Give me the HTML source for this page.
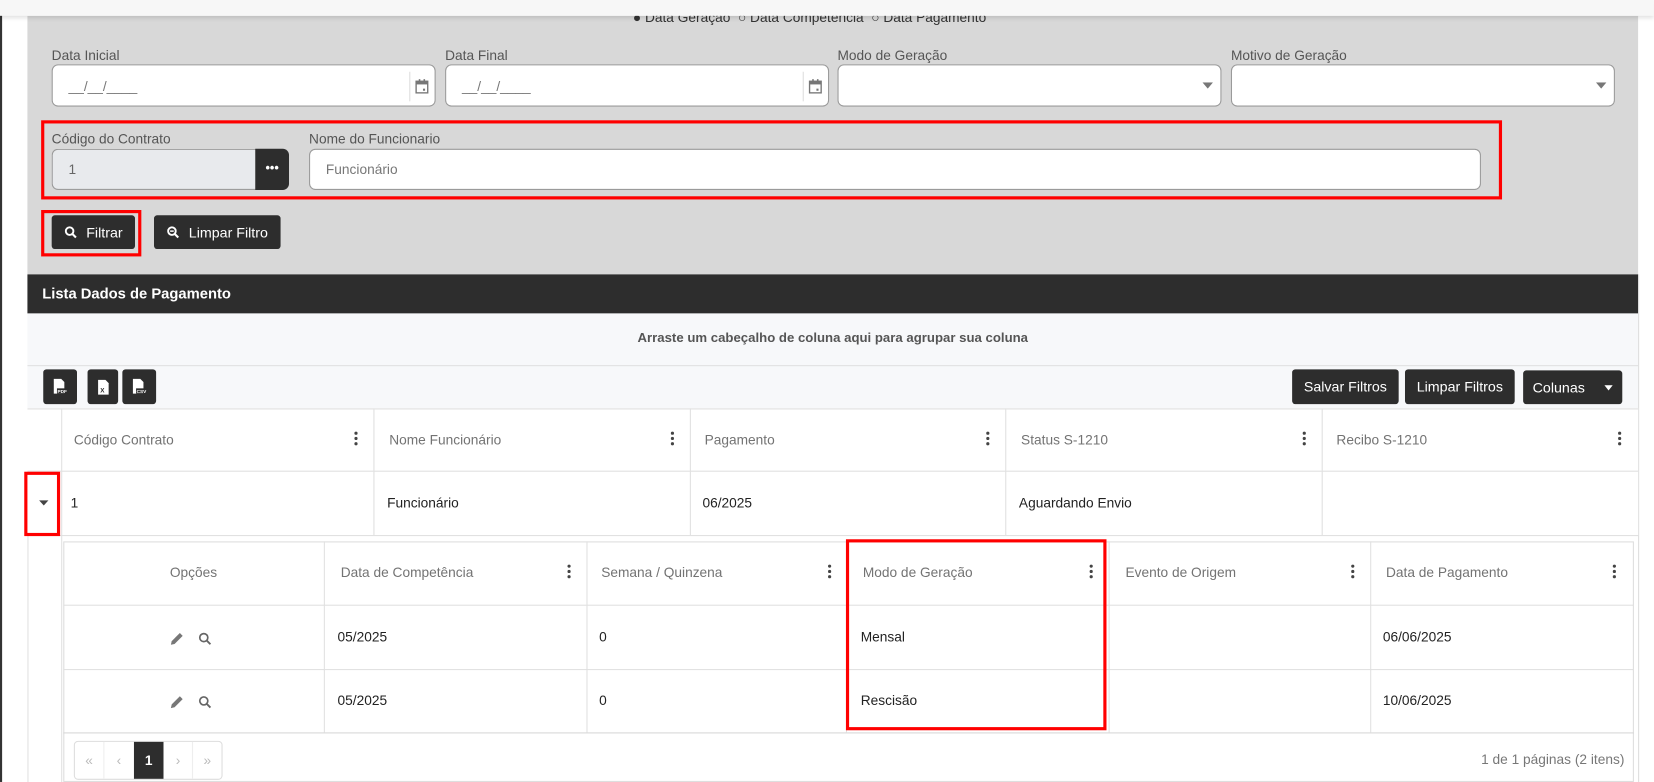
<!DOCTYPE html>
<html><head><meta charset="utf-8"><style>
*{box-sizing:border-box;margin:0;padding:0}
html,body{width:1654px;height:782px;overflow:hidden;background:#fff;font-family:"Liberation Sans",sans-serif}
#w{position:absolute;left:0;top:0;width:1568px;height:741px;transform:scale(1.0548,1.0553);transform-origin:0 0}
.a{position:absolute}
.lbl{position:absolute;font-size:13px;color:#555}
.inp{position:absolute;background:#fff;border:1px solid #9a9a9a;border-radius:6px;height:40px}
.red{position:absolute;border:3px solid #f00}
.btn{position:absolute;background:#2d2d2d;color:#fff;border-radius:3px;font-size:13.5px;display:flex;align-items:center;justify-content:center}
.hc{position:absolute;font-size:13px;color:#737373}
.tc{position:absolute;font-size:13px;color:#222}
.vl{position:absolute;width:1px;background:#e0e0e0}
.hl{position:absolute;height:1px;background:#e0e0e0}
.keb{position:absolute;width:3px;height:13px}
.keb i{display:block;width:3px;height:3px;border-radius:50%;background:#444;margin-bottom:2px}
</style></head><body><div id="w">
<div class="a" style="left:0;top:0;width:2px;height:741px;background:#333"></div>
<div class="a" style="left:26px;top:15px;width:1527px;height:245px;background:#d8d8d8"></div>
<div class="a" style="left:600px;top:9px;font-size:13px;color:#333;white-space:nowrap">● Data Geração &nbsp;○ Data Competência &nbsp;○ Data Pagamento</div>
<div class="a" style="left:0;top:0;width:1568px;height:15px;background:#f7f7f7;box-shadow:0 2px 4px rgba(0,0,0,.12)"></div>

<div class="lbl" style="left:49px;top:45px">Data Inicial</div>
<div class="lbl" style="left:422px;top:45px">Data Final</div>
<div class="lbl" style="left:794px;top:45px">Modo de Geração</div>
<div class="lbl" style="left:1167px;top:45px">Motivo de Geração</div>
<div class="inp" style="left:49px;top:61px;width:364px"><span class="a" style="left:15px;top:12px;font-size:13px;color:#777">__/__/____</span><span class="a" style="left:338px;top:6px;width:1px;height:28px;background:#ddd"></span><svg class="a" style="left:343px;top:12px" width="14" height="15" viewBox="0 0 14 15"><rect x="1.5" y="3" width="11" height="11" fill="none" stroke="#777" stroke-width="1.3"/><rect x="1.5" y="3" width="11" height="3" fill="#777"/><rect x="4" y="1" width="1.5" height="3" fill="#777"/><rect x="8.5" y="1" width="1.5" height="3" fill="#777"/><rect x="8" y="10" width="2" height="2" fill="#777"/></svg></div>
<div class="inp" style="left:422px;top:61px;width:364px"><span class="a" style="left:15px;top:12px;font-size:13px;color:#777">__/__/____</span><span class="a" style="left:338px;top:6px;width:1px;height:28px;background:#ddd"></span><svg class="a" style="left:343px;top:12px" width="14" height="15" viewBox="0 0 14 15"><rect x="1.5" y="3" width="11" height="11" fill="none" stroke="#777" stroke-width="1.3"/><rect x="1.5" y="3" width="11" height="3" fill="#777"/><rect x="4" y="1" width="1.5" height="3" fill="#777"/><rect x="8.5" y="1" width="1.5" height="3" fill="#777"/><rect x="8" y="10" width="2" height="2" fill="#777"/></svg></div>
<div class="inp" style="left:794px;top:61px;width:364px"><svg class="a" style="left:345px;top:16px" width="10" height="6"><path d="M0 0H10L5 6Z" fill="#777"/></svg></div>
<div class="inp" style="left:1167px;top:61px;width:364px"><svg class="a" style="left:345px;top:16px" width="10" height="6"><path d="M0 0H10L5 6Z" fill="#777"/></svg></div>

<div class="red" style="left:39px;top:114px;width:1385px;height:75px"></div>
<div class="lbl" style="left:49px;top:124px">Código do Contrato</div>
<div class="lbl" style="left:293px;top:124px">Nome do Funcionario</div>
<div class="a" style="left:49px;top:141px;width:194px;height:39px;background:#e8eaed;border:1px solid #9a9a9a;border-right:none;border-radius:6px 0 0 6px"><span class="a" style="left:15px;top:11px;font-size:13px;color:#666">1</span></div>
<div class="a" style="left:242px;top:141px;width:32px;height:39px;background:#2d2d2d;border-radius:0 6px 6px 0;color:#fff;font-size:12px;text-align:center;line-height:36px;font-weight:bold">•••</div>
<div class="inp" style="left:293px;top:141px;width:1111px;height:39px"><span class="a" style="left:15px;top:11px;font-size:13px;color:#777">Funcionário</span></div>

<div class="red" style="left:39px;top:199px;width:95px;height:44px"></div>
<div class="btn" style="left:49px;top:204px;width:79px;height:32px"><svg width="12" height="12" viewBox="0 0 12 12" style="margin-right:9px"><circle cx="5" cy="5" r="3.6" fill="none" stroke="#fff" stroke-width="1.8"/><path d="M7.6 7.6L11 11" stroke="#fff" stroke-width="2"/></svg>Filtrar</div>
<div class="btn" style="left:146px;top:204px;width:120px;height:32px"><svg width="12" height="12" viewBox="0 0 12 12" style="margin-right:9px"><circle cx="5" cy="5" r="3.6" fill="none" stroke="#fff" stroke-width="1.8"/><path d="M3.3 5H6.7" stroke="#fff" stroke-width="1.4"/><path d="M7.6 7.6L11 11" stroke="#fff" stroke-width="2"/></svg>Limpar Filtro</div>

<div class="a" style="left:26px;top:260px;width:1527px;height:37px;background:#2d2d2d;color:#fff;font-weight:bold;font-size:14px;padding:10px 14px">Lista Dados de Pagamento</div>
<div class="a" style="left:26px;top:297px;width:1527px;height:90px;background:#f7f8fa"></div>
<div class="hl" style="left:26px;top:346px;width:1527px"></div>
<div class="a" style="left:26px;top:313px;width:1527px;text-align:center;font-size:12.5px;color:#555;font-weight:bold">Arraste um cabeçalho de coluna aqui para agrupar sua coluna</div>
<div class="a" style="left:1553px;top:260px;width:1px;height:481px;background:#ddd"></div>

<div class="btn" style="left:41px;top:350px;width:32px;height:33px"><svg width="16" height="18" viewBox="0 0 16 18"><path d="M2 1H9L12 4V15H2Z" fill="#fff"/><rect x="5" y="10" width="11" height="5" fill="#2d2d2d"/><text x="5.5" y="14.5" font-size="4.5" fill="#fff" font-family="Liberation Sans" font-weight="bold">PDF</text></svg></div>
<div class="btn" style="left:83px;top:350px;width:29px;height:33px"><svg width="12" height="16" viewBox="0 0 12 16"><path d="M1 1H8L11 4V15H1Z" fill="#fff"/><text x="3" y="13" font-size="6" fill="#2d2d2d" font-family="Liberation Sans" font-weight="bold">X</text></svg></div>
<div class="btn" style="left:116px;top:350px;width:32px;height:33px"><svg width="16" height="18" viewBox="0 0 16 18"><path d="M2 1H9L12 4V15H2Z" fill="#fff"/><rect x="5" y="10" width="11" height="5" fill="#2d2d2d"/><text x="5.5" y="14.5" font-size="4.5" fill="#fff" font-family="Liberation Sans" font-weight="bold">CSV</text></svg></div>
<div class="btn" style="left:1225px;top:350px;width:101px;height:33px">Salvar Filtros</div>
<div class="btn" style="left:1332px;top:350px;width:104px;height:33px">Limpar Filtros</div>
<div class="btn" style="left:1444px;top:351px;width:94px;height:32px;justify-content:flex-start;padding-left:9px">Colunas<svg width="8" height="5" style="margin-left:18px"><path d="M0 0H8L4 5Z" fill="#fff"/></svg></div>

<div class="a" style="left:26px;top:387px;width:1527px;height:120px;background:#fff"></div>
<div class="hl" style="left:26px;top:387px;width:1527px"></div>
<div class="hl" style="left:26px;top:446px;width:1527px"></div>
<div class="hl" style="left:26px;top:507px;width:1527px"></div>
<div class="vl" style="left:58px;top:387px;height:354px"></div>
<div class="vl" style="left:26px;top:507px;height:234px"></div>
<div class="vl" style="left:354px;top:387px;height:120px"></div>
<div class="vl" style="left:654px;top:387px;height:120px"></div>
<div class="vl" style="left:953px;top:387px;height:120px"></div>
<div class="vl" style="left:1253px;top:387px;height:120px"></div>
<div class="hc" style="left:70px;top:409px">Código Contrato</div>
<div class="hc" style="left:369px;top:409px">Nome Funcionário</div>
<div class="hc" style="left:668px;top:409px">Pagamento</div>
<div class="hc" style="left:968px;top:409px">Status S-1210</div>
<div class="hc" style="left:1267px;top:409px">Recibo S-1210</div>
<div class="keb" style="left:336px;top:409px"><i></i><i></i><i></i></div>
<div class="keb" style="left:636px;top:409px"><i></i><i></i><i></i></div>
<div class="keb" style="left:935px;top:409px"><i></i><i></i><i></i></div>
<div class="keb" style="left:1235px;top:409px"><i></i><i></i><i></i></div>
<div class="keb" style="left:1534px;top:409px"><i></i><i></i><i></i></div>
<svg class="a" style="left:37px;top:474px" width="9" height="5"><path d="M0 0H9L4.5 5Z" fill="#444"/></svg>
<div class="tc" style="left:67px;top:469px">1</div>
<div class="tc" style="left:367px;top:469px">Funcionário</div>
<div class="tc" style="left:666px;top:469px">06/2025</div>
<div class="tc" style="left:966px;top:469px">Aguardando Envio</div>
<div class="red" style="left:23px;top:447px;width:34px;height:61px"></div>

<div class="a" style="left:60px;top:513px;width:1489px;height:228px;border:1px solid #ddd;background:#fff"></div>
<div class="hl" style="left:60px;top:573px;width:1489px"></div>
<div class="hl" style="left:60px;top:634px;width:1489px"></div>
<div class="hl" style="left:60px;top:694px;width:1489px;background:#d6d6d6"></div>
<div class="vl" style="left:307px;top:513px;height:181px"></div>
<div class="vl" style="left:556px;top:513px;height:181px"></div>
<div class="vl" style="left:802px;top:513px;height:181px"></div>
<div class="vl" style="left:1051px;top:513px;height:181px"></div>
<div class="vl" style="left:1299px;top:513px;height:181px"></div>
<div class="hc" style="left:161px;top:535px">Opções</div>
<div class="hc" style="left:323px;top:535px">Data de Competência</div>
<div class="hc" style="left:570px;top:535px">Semana / Quinzena</div>
<div class="hc" style="left:818px;top:535px">Modo de Geração</div>
<div class="hc" style="left:1067px;top:535px">Evento de Origem</div>
<div class="hc" style="left:1314px;top:535px">Data de Pagamento</div>
<div class="keb" style="left:538px;top:535px"><i></i><i></i><i></i></div>
<div class="keb" style="left:785px;top:535px"><i></i><i></i><i></i></div>
<div class="keb" style="left:1033px;top:535px"><i></i><i></i><i></i></div>
<div class="keb" style="left:1281px;top:535px"><i></i><i></i><i></i></div>
<div class="keb" style="left:1529px;top:535px"><i></i><i></i><i></i></div>

<svg class="a" style="left:161px;top:598px" width="14" height="14" viewBox="0 0 14 14"><path d="M1 13L1.8 9.5L9.5 1.8L12.2 4.5L4.5 12.2Z" fill="#777"/></svg>
<svg class="a" style="left:188px;top:599px" width="13" height="13" viewBox="0 0 13 13"><circle cx="5.2" cy="5.2" r="3.8" fill="none" stroke="#666" stroke-width="1.6"/><path d="M8 8L11.5 11.5" stroke="#666" stroke-width="1.8"/></svg>
<svg class="a" style="left:161px;top:658px" width="14" height="14" viewBox="0 0 14 14"><path d="M1 13L1.8 9.5L9.5 1.8L12.2 4.5L4.5 12.2Z" fill="#777"/></svg>
<svg class="a" style="left:188px;top:659px" width="13" height="13" viewBox="0 0 13 13"><circle cx="5.2" cy="5.2" r="3.8" fill="none" stroke="#666" stroke-width="1.6"/><path d="M8 8L11.5 11.5" stroke="#666" stroke-width="1.8"/></svg>
<div class="tc" style="left:320px;top:596px">05/2025</div>
<div class="tc" style="left:568px;top:596px">0</div>
<div class="tc" style="left:816px;top:596px">Mensal</div>
<div class="tc" style="left:1311px;top:596px">06/06/2025</div>
<div class="tc" style="left:320px;top:656px">05/2025</div>
<div class="tc" style="left:568px;top:656px">0</div>
<div class="tc" style="left:816px;top:656px">Rescisão</div>
<div class="tc" style="left:1311px;top:656px">10/06/2025</div>
<div class="red" style="left:802px;top:511px;width:247px;height:181px"></div>

<div class="a" style="left:70px;top:702px;width:141px;height:37px;border:1px solid #ddd;border-radius:4px;display:flex;font-size:13px;color:#bbb">
<div style="width:28px;text-align:center;line-height:35px;border-right:1px solid #eee">«</div>
<div style="width:28px;text-align:center;line-height:35px">‹</div>
<div style="width:29px;text-align:center;line-height:35px;background:#2d2d2d;color:#fff;font-weight:bold">1</div>
<div style="width:28px;text-align:center;line-height:35px;border-right:1px solid #eee">›</div>
<div style="width:27px;text-align:center;line-height:35px">»</div>
</div>
<div class="a" style="left:1300px;top:712px;width:240px;text-align:right;font-size:13px;color:#777">1 de 1 páginas (2 itens)</div>
</div></body></html>
